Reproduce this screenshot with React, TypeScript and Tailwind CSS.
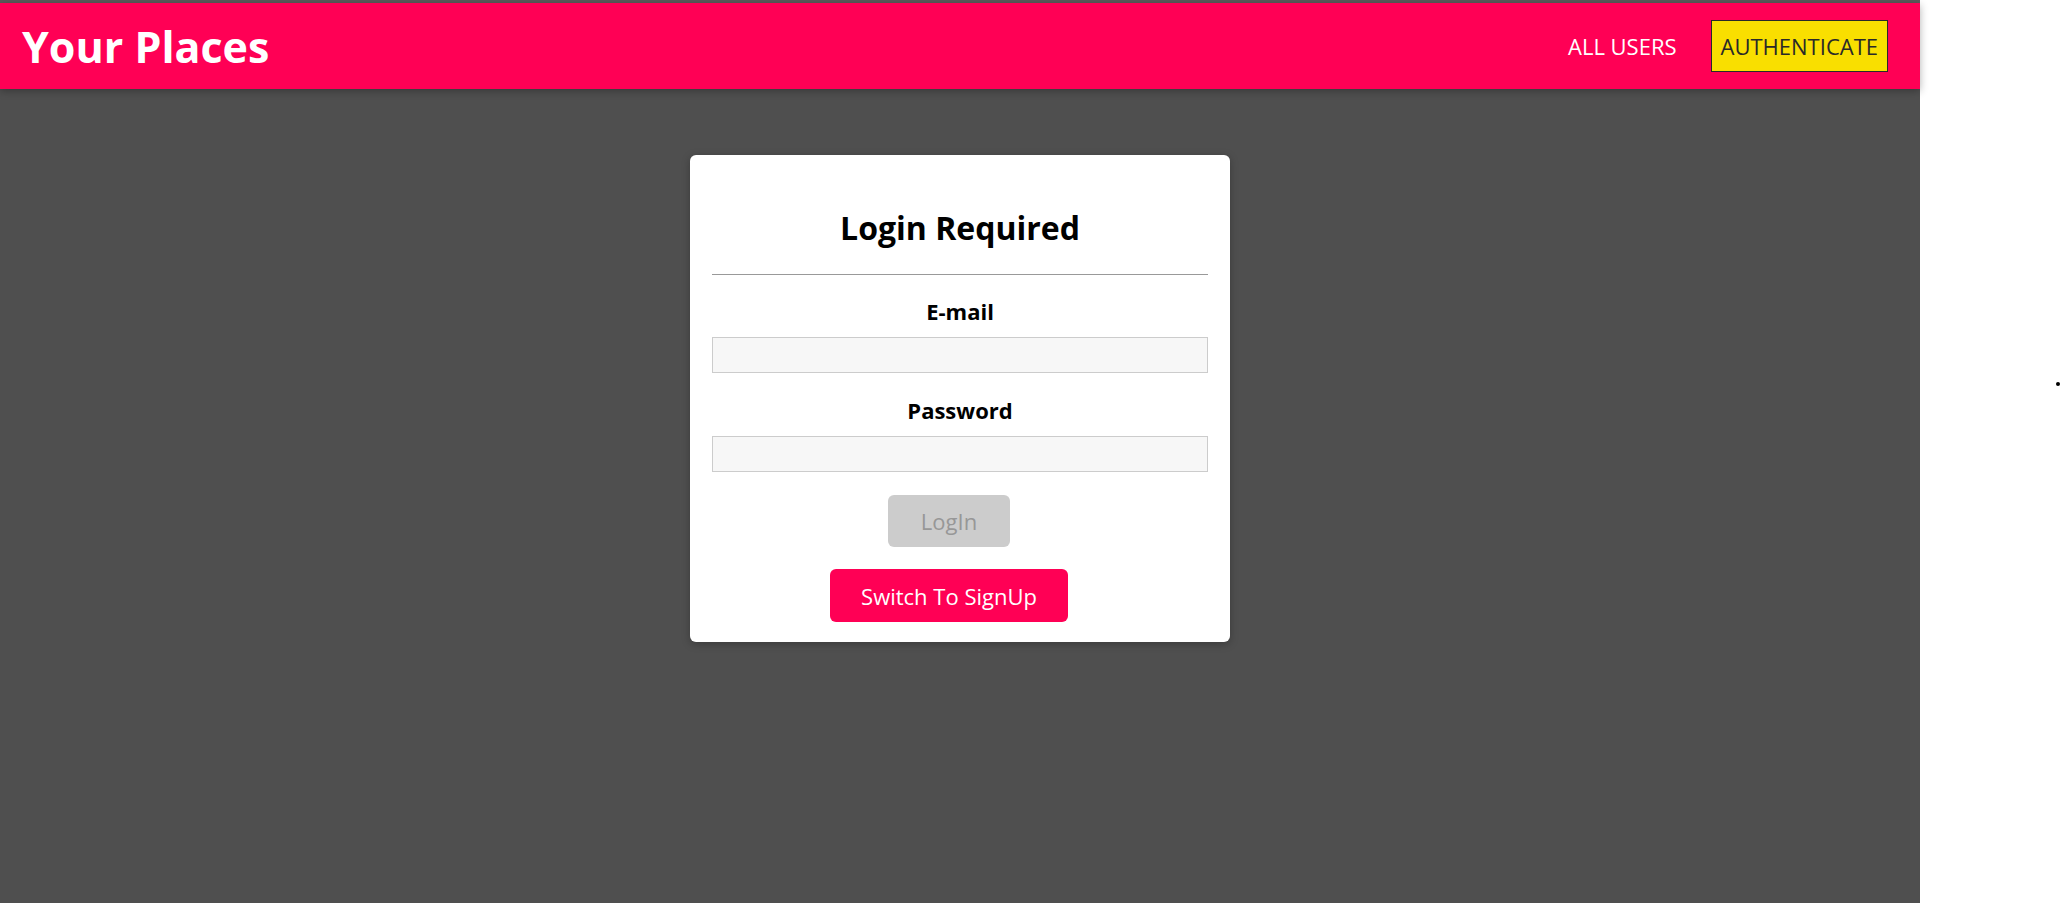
import React from 'react';

const FONT = { fontFamily: '"Open Sans", "Liberation Sans", sans-serif' };

function Header() {
  return (
    <header className="relative z-10">
      <div className="h-[3px] bg-[#5b5b5b]" />
      <div className="flex h-[86px] items-center justify-between bg-[#ff0055] px-[22px] shadow-[0_2px_8px_rgba(0,0,0,0.3)]">
        <h1 className="text-[43px] font-bold leading-none text-white">Your Places</h1>
        <nav className="flex items-center gap-[34px] pr-[10px]">
          <a className="text-[22px] leading-[30px] text-white">ALL USERS</a>
          <button className="flex h-[52px] items-center border border-[#292929] bg-[#f9df00] px-[9px] text-[22px] leading-[30px] text-[#292929]">
            AUTHENTICATE
          </button>
        </nav>
      </div>
    </header>
  );
}

function Field({ label, type }: { label: string; type: string }) {
  return (
    <div className="flex flex-col items-stretch">
      <label className="text-center text-[22px] font-bold leading-[30px] text-black">{label}</label>
      <input
        type={type}
        className="mt-[11px] h-[36px] border border-[#cccccc] bg-[#f7f7f7] px-2 text-[22px] outline-none"
      />
    </div>
  );
}

function AuthCard() {
  return (
    <div className="w-[540px] rounded-[6px] bg-white px-[22px] pb-[20px] pt-[50px] shadow-[0_2px_8px_rgba(0,0,0,0.26)]">
      <h2 className="text-center text-[32px] font-bold leading-[45px] text-black">Login Required</h2>
      <hr className="mt-[24px] border-0 border-t border-[#999999]" />
      <form className="mt-[21px] flex flex-col">
        <Field label="E-mail" type="email" />
        <div className="mt-[22px]">
          <Field label="Password" type="password" />
        </div>
        <div className="mt-[23px] flex justify-center">
          <button
            type="button"
            disabled
            className="mr-[22px] h-[52px] rounded-[6px] bg-[#cccccc] px-[33px] text-[22px] leading-[30px] text-[#979797]"
          >
            LogIn
          </button>
        </div>
      </form>
      <div className="mt-[22px] flex justify-center">
        <button className="mr-[22px] h-[53px] rounded-[6px] bg-[#ff0055] px-[31px] text-[22px] leading-[30px] text-white">
          Switch To SignUp
        </button>
      </div>
    </div>
  );
}

export default function App() {
  return (
    <div className="flex h-[903px] w-full overflow-hidden" style={FONT}>
      <div className="flex w-[1920px] shrink-0 flex-col bg-[#4f4f4f]">
        <Header />
        <main className="flex justify-center pt-[66px]">
          <AuthCard />
        </main>
      </div>
      <div className="flex flex-1 justify-end bg-white pr-[3px] pt-[382px]">
        <div className="h-[4px] w-[4px] rounded-full bg-black" />
      </div>
    </div>
  );
}
